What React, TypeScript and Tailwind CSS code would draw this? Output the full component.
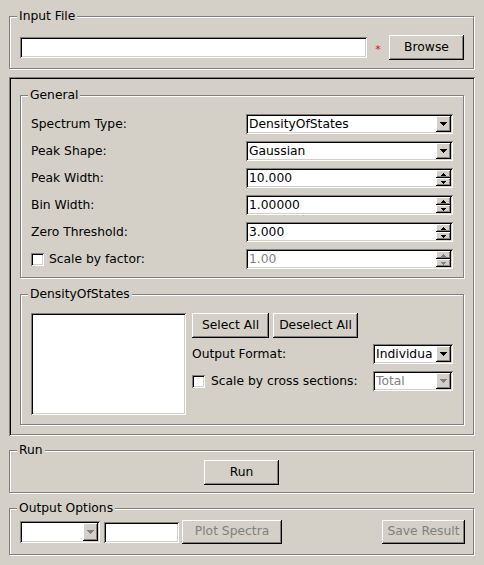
import type { ReactNode } from 'react';

const sunken =
  'shadow-[inset_1px_1px_0_#808080,inset_-1px_-1px_0_#ffffff,inset_2px_2px_0_#000000,inset_-2px_-2px_0_#d4d0c8]';
const raised =
  'shadow-[inset_-1px_-1px_0_#000000,inset_1px_1px_0_#ffffff,inset_-2px_-2px_0_#808080]';

function Group({ title, className = '', children }: { title: string; className?: string; children: ReactNode }) {
  return (
    <fieldset
      className={`min-w-0 border border-[#808080] shadow-[1px_1px_0_#ffffff,inset_1px_1px_0_#ffffff] ${className}`}
    >
      <legend className="ml-[7px] bg-[#d4d0c8] px-[2px] leading-[14px]">{title}</legend>
      {children}
    </fieldset>
  );
}

function Arrow({ dir, disabled }: { dir: 'down' | 'up' | 'small-down'; disabled?: boolean }) {
  const fill = disabled ? '#808080' : '#000000';
  if (dir === 'down') {
    return (
      <svg width="7" height="4" shapeRendering="crispEdges">
        <rect x="0" y="0" width="7" height="1" fill={fill} />
        <rect x="1" y="1" width="5" height="1" fill={fill} />
        <rect x="2" y="2" width="3" height="1" fill={fill} />
        <rect x="3" y="3" width="1" height="1" fill={fill} />
      </svg>
    );
  }
  if (dir === 'up') {
    return (
      <svg width="5" height="3" shapeRendering="crispEdges">
        <rect x="2" y="0" width="1" height="1" fill={fill} />
        <rect x="1" y="1" width="3" height="1" fill={fill} />
        <rect x="0" y="2" width="5" height="1" fill={fill} />
      </svg>
    );
  }
  return (
    <svg width="5" height="3" shapeRendering="crispEdges">
      <rect x="0" y="0" width="5" height="1" fill={fill} />
      <rect x="1" y="1" width="3" height="1" fill={fill} />
      <rect x="2" y="2" width="1" height="1" fill={fill} />
    </svg>
  );
}

function Combo({ value, width, height = 'h-[20px]', disabled }: { value: string; width: string; height?: string; disabled?: boolean }) {
  return (
    <div className={`flex ${width} ${height} shrink-0 bg-white p-[2px] ${sunken}`}>
      <div
        className={`flex-1 overflow-hidden whitespace-nowrap pl-[1px] leading-[17px] ${disabled ? 'text-[#808080]' : ''}`}
      >
        {value}
      </div>
      <div className="w-[3px] shrink-0" />
      <div className={`flex w-[15px] shrink-0 items-center justify-center bg-[#d4d0c8] ${raised}`}>
        <Arrow dir="down" disabled={disabled} />
      </div>
    </div>
  );
}

function Spin({ value, disabled }: { value: string; disabled?: boolean }) {
  return (
    <div className={`flex h-[20px] w-[207px] bg-white p-[2px] ${sunken}`}>
      <div className={`flex-1 pl-[1px] leading-[17px] ${disabled ? 'text-[#808080]' : ''}`}>{value}</div>
      <div className="flex w-[15px] flex-col">
        <div className={`flex h-[8px] items-center justify-center bg-[#d4d0c8] ${raised}`}>
          <Arrow dir="up" disabled={disabled} />
        </div>
        <div className={`flex h-[8px] items-center justify-center bg-[#d4d0c8] ${raised}`}>
          <Arrow dir="small-down" disabled={disabled} />
        </div>
      </div>
    </div>
  );
}

function Button({ label, className = '', disabled }: { label: string; className?: string; disabled?: boolean }) {
  return (
    <button
      className={`flex shrink-0 items-center justify-center bg-[#d4d0c8] pb-[1px] ${raised} ${
        disabled ? 'text-[#808080]' : 'text-black'
      } ${className}`}
    >
      {label}
    </button>
  );
}

function Check() {
  return <div className={`h-[13px] w-[13px] shrink-0 bg-white ${sunken}`} />;
}

function Row({ label, children }: { label: ReactNode; children: ReactNode }) {
  return (
    <div className="flex h-[20px] items-center">
      <div className="flex flex-1 items-center pt-[1px]">{label}</div>
      {children}
    </div>
  );
}

export default function App() {
  return (
    <div className="h-[565px] w-[484px] overflow-hidden bg-[#d4d0c8] px-[9px] pt-[9px] font-['DejaVu_Sans',sans-serif] text-[12.3px] text-black">
      <Group title="Input File" className="mr-[1px]">
        <div className="flex items-center pb-[8px] pl-[10px] pt-[12px]">
          <div className={`h-[21px] w-[347px] bg-white ${sunken}`} />
          <span className="mt-[5px] w-[22px] text-center text-[11px] text-[#d01010]">*</span>
          <Button label="Browse" className="h-[25px] w-[75px]" />
        </div>
      </Group>

      <div className="mt-[8px] p-[11px] shadow-[inset_1px_1px_0_#808080,inset_-1px_-1px_0_#ffffff,inset_2px_2px_0_#000000,inset_-2px_-2px_0_#808080]">
        <Group title="General">
          <div className="flex flex-col gap-[7px] px-[10px] pb-[8px] pt-[12px]">
            <Row label="Spectrum Type:">
              <Combo value="DensityOfStates" width="w-[207px]" />
            </Row>
            <Row label="Peak Shape:">
              <Combo value="Gaussian" width="w-[207px]" />
            </Row>
            <Row label="Peak Width:">
              <Spin value="10.000" />
            </Row>
            <Row label="Bin Width:">
              <Spin value="1.00000" />
            </Row>
            <Row label="Zero Threshold:">
              <Spin value="3.000" />
            </Row>
            <Row
              label={
                <>
                  <Check />
                  <span className="ml-[5px]">Scale by factor:</span>
                </>
              }
            >
              <Spin value="1.00" disabled />
            </Row>
          </div>
        </Group>

        <Group title="DensityOfStates" className="mt-[9px]">
          <div className="flex gap-[6px] px-[10px] pb-[9px] pt-[12px]">
            <div className={`h-[102px] w-[155px] shrink-0 bg-white ${sunken}`} />
            <div className="flex flex-1 flex-col">
              <div className="flex gap-[4px]">
                <Button label="Select All" className="h-[25px] w-[77px]" />
                <Button label="Deselect All" className="h-[25px] w-[85px]" />
              </div>
              <div className="mt-[6px]">
                <Row label="Output Format:">
                  <Combo value="Individual" width="w-[80px]" />
                </Row>
              </div>
              <div className="mt-[7px]">
                <Row
                  label={
                    <>
                      <Check />
                      <span className="ml-[6px]">Scale by cross sections:</span>
                    </>
                  }
                >
                  <Combo value="Total" width="w-[80px]" disabled />
                </Row>
              </div>
            </div>
          </div>
        </Group>
      </div>

      <Group title="Run" className="mr-[1px] mt-[7px]">
        <div className="flex justify-center pb-[7px] pt-[3px]">
          <Button label="Run" className="h-[25px] w-[75px]" />
        </div>
      </Group>

      <Group title="Output Options" className="mr-[1px] mt-[8px]">
        <div className="flex items-center pb-[10px] pl-[10px] pr-[8px] pt-[5px]">
          <Combo value="" width="w-[80px]" height="h-[22px]" disabled />
          <div className={`ml-[4px] h-[21px] w-[75px] bg-white ${sunken}`} />
          <Button label="Plot Spectra" className="ml-[3px] h-[24px] w-[100px]" disabled />
          <div className="flex-1" />
          <Button label="Save Result" className="h-[24px] w-[83px]" disabled />
        </div>
      </Group>
    </div>
  );
}
